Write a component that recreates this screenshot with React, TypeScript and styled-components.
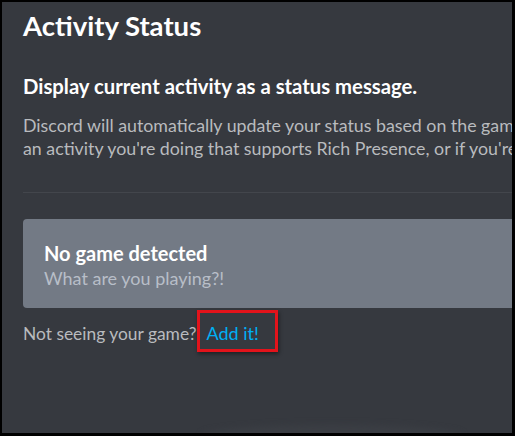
import React from "react";
import styled, { createGlobalStyle } from "styled-components";

const Global = createGlobalStyle`
  html, body { margin: 0; padding: 0; background: #000; }
  body { width: 515px; height: 436px; overflow: hidden; }
`;

const Frame = styled.div`
  width: 515px;
  height: 436px;
  box-sizing: border-box;
  background: #000;
  padding: 2px 3px 3px 2px;
`;

const Panel = styled.div`
  position: relative;
  height: 100%;
  background: #36393f;
  overflow: hidden;
  padding: 6px 0 0 21px;
  box-sizing: border-box;
  font-family: "Lato", "Open Sans", sans-serif;
`;

const Title = styled.h1`
  margin: 0;
  font-size: 27.5px;
  line-height: 36px;
  font-weight: 700;
  color: #ffffff;
  white-space: nowrap;
`;

const Heading = styled.h2`
  margin: 30px 0 0;
  font-size: 20.3px;
  line-height: 24px;
  font-weight: 700;
  color: #ffffff;
  white-space: nowrap;
`;

const Description = styled.p`
  margin: 15.5px 0 0;
  font-size: 17.8px;
  line-height: 23px;
  color: #b9bbbe;
  white-space: nowrap;
`;

const Divider = styled.div`
  margin-top: 32px;
  height: 1px;
  background: #43464c;
`;

const Card = styled.div`
  margin-top: 26px;
  height: 89px;
  box-sizing: border-box;
  background: #737a85;
  border-radius: 4px 0 0 4px;
  padding: 22.6px 0 0 21px;
  display: flex;
  flex-direction: column;
`;

const CardTitle = styled.div`
  font-size: 20px;
  line-height: 24px;
  font-weight: 700;
  color: #ffffff;
`;

const CardSub = styled.div`
  margin-top: 2.4px;
  font-size: 18px;
  line-height: 22px;
  color: #b8bec8;
`;

const Footer = styled.div`
  margin-top: 2px;
  display: flex;
  align-items: baseline;
  font-size: 17.4px;
  color: #b9bbbe;
  white-space: nowrap;
`;

const Highlight = styled.span`
  display: inline-flex;
  align-items: center;
  height: 42px;
  box-sizing: border-box;
  padding: 4px 16px 0 6px;
  margin-left: 1px;
  border: 3px solid #e3131b;
  box-shadow: 1px 2px 4px rgba(0, 0, 0, 0.45);
`;

const Link = styled.a`
  color: #00b0f4;
  text-decoration: none;
  font-size: 18px;
`;

const Glow = styled.div`
  position: absolute;
  left: 200px;
  bottom: -14px;
  width: 260px;
  height: 22px;
  border-radius: 50%;
  background: #3b3e44;
  filter: blur(3px);
`;

export default function App() {
  return (
    <>
      <Global />
      <Frame>
        <Panel>
          <Title>Activity Status</Title>
          <Heading>Display current activity as a status message.</Heading>
          <Description>
            Discord will automatically update your status based on the game you're playing, if
            <br />
            an activity you're doing that supports Rich Presence, or if you're streaming.
          </Description>
          <Divider />
          <Card>
            <CardTitle>No game detected</CardTitle>
            <CardSub>What are you playing?!</CardSub>
          </Card>
          <Footer>
            Not seeing your game?
            <Highlight>
              <Link href="#">Add it!</Link>
            </Highlight>
          </Footer>
          <Glow />
        </Panel>
      </Frame>
    </>
  );
}
